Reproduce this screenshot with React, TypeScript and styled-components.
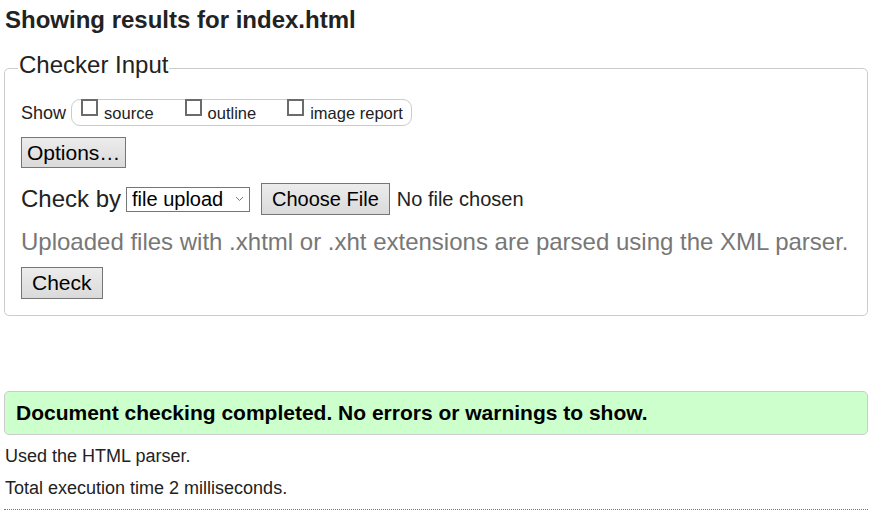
import React from "react";
import styled, { createGlobalStyle } from "styled-components";

const Global = createGlobalStyle`
  html, body { margin: 0; padding: 0; background: #fff; }
  body { font-family: "Liberation Sans", Arial, sans-serif; color: #222; }
`;

const Page = styled.div`
  width: 864px;
  padding: 0 0 0 4px;
`;

const Heading = styled.h2`
  margin: 0;
  padding: 6px 0 0 1px;
  font-size: 24px;
  line-height: 28px;
  font-weight: bold;
  color: #222;
`;

const Fieldset = styled.fieldset`
  margin: 16px 0 0 0;
  padding: 13px 16px 16px 16px;
  border: 1px solid #ccc;
  border-radius: 5px;
`;

const Legend = styled.legend`
  font-size: 24px;
  line-height: 28px;
  padding: 1px 1px 7px 1px;
  margin-left: -3px;
  color: #222;
`;

const ShowRow = styled.div`
  display: flex;
  align-items: flex-start;
  gap: 5px;
`;

const ShowText = styled.span`
  font-size: 18px;
  line-height: 20px;
  margin-top: 4px;
`;

const ShowGroup = styled.div`
  display: flex;
  align-items: flex-start;
  box-sizing: border-box;
  height: 27px;
  gap: 31px;
  padding: 3px 8px 0 9px;
  border: 1px solid #ccc;
  border-radius: 9px;
`;

const CheckLabel = styled.label`
  display: flex;
  align-items: flex-start;
  gap: 6px;
  font-size: 16.5px;
  line-height: 20px;
  color: #222;
`;

const Box = styled.span`
  display: block;
  flex: none;
  box-sizing: border-box;
  width: 17px;
  height: 17px;
  border: 2px solid #6b6b6b;
  margin-top: -4px;
  background: #fff;
`;

const Button = styled.button<{ $pad: number; $h: number }>`
  box-sizing: border-box;
  height: ${(p) => p.$h}px;
  padding: 0 ${(p) => p.$pad}px;
  font-family: "Liberation Sans", Arial, sans-serif;
  font-size: 21px;
  color: #000;
  background: linear-gradient(#ececec, #dadada);
  border: 1px solid #767676;
  border-radius: 0;
  cursor: pointer;
`;

const OptionsRow = styled.div`
  margin-top: 11px;
  display: flex;
`;

const CheckByRow = styled.div`
  display: flex;
  align-items: center;
  margin-top: 15px;
  font-size: 24px;
  color: #222;
`;

const Select = styled.div`
  display: flex;
  align-items: center;
  justify-content: space-between;
  box-sizing: border-box;
  width: 124px;
  height: 25px;
  margin-left: 5px;
  padding: 0 5px 0 5px;
  border: 1px solid #767676;
  font-size: 20px;
  color: #000;
`;

const Chevron = styled.svg`
  width: 9px;
  height: 6px;
`;

const FileButton = styled(Button)`
  margin-left: 11px;
  font-size: 20px;
`;

const NoFile = styled.span`
  margin-left: 7px;
  font-size: 20px;
  color: #222;
`;

const Hint = styled.p`
  margin: 13px 0 0 0;
  font-size: 24px;
  line-height: 28px;
  color: #777;
`;

const CheckRow = styled.div`
  margin-top: 11px;
  display: flex;
`;

const Success = styled.div`
  box-sizing: border-box;
  height: 44px;
  margin-top: 75px;
  display: flex;
  align-items: center;
  padding: 0 11px;
  background: #ccffcc;
  border: 1px solid #ccc;
  border-radius: 5px;
  font-size: 21px;
  font-weight: bold;
  color: #000;
`;

const Detail = styled.p<{ $first?: boolean }>`
  margin: ${(p) => (p.$first ? "5px" : "0")} 0 0 0;
  padding-left: 1px;
  font-size: 18px;
  line-height: 32px;
  color: #222;
`;

const Rule = styled.hr`
  margin: 5px 0 0 0;
  border: 0;
  border-top: 1px dotted #777;
`;

export default function App() {
  return (
    <Page>
      <Global />
      <Heading>Showing results for index.html</Heading>
      <Fieldset>
        <Legend>Checker Input</Legend>
        <ShowRow>
          <ShowText>Show</ShowText>
          <ShowGroup>
            <CheckLabel><Box />source</CheckLabel>
            <CheckLabel><Box />outline</CheckLabel>
            <CheckLabel><Box />image report</CheckLabel>
          </ShowGroup>
        </ShowRow>
        <OptionsRow>
          <Button $pad={5} $h={31}>Options…</Button>
        </OptionsRow>
        <CheckByRow>
          <span>Check by</span>
          <Select>
            <span>file upload</span>
            <Chevron viewBox="0 0 9 6">
              <path d="M1 1 L4.5 4.5 L8 1" fill="none" stroke="#777" strokeWidth="1" />
            </Chevron>
          </Select>
          <FileButton $pad={10} $h={32}>Choose File</FileButton>
          <NoFile>No file chosen</NoFile>
        </CheckByRow>
        <Hint>Uploaded files with .xhtml or .xht extensions are parsed using the XML parser.</Hint>
        <CheckRow>
          <Button $pad={10} $h={32}>Check</Button>
        </CheckRow>
      </Fieldset>
      <Success>Document checking completed. No errors or warnings to show.</Success>
      <Detail $first>Used the HTML parser.</Detail>
      <Detail>Total execution time 2 milliseconds.</Detail>
      <Rule />
    </Page>
  );
}
